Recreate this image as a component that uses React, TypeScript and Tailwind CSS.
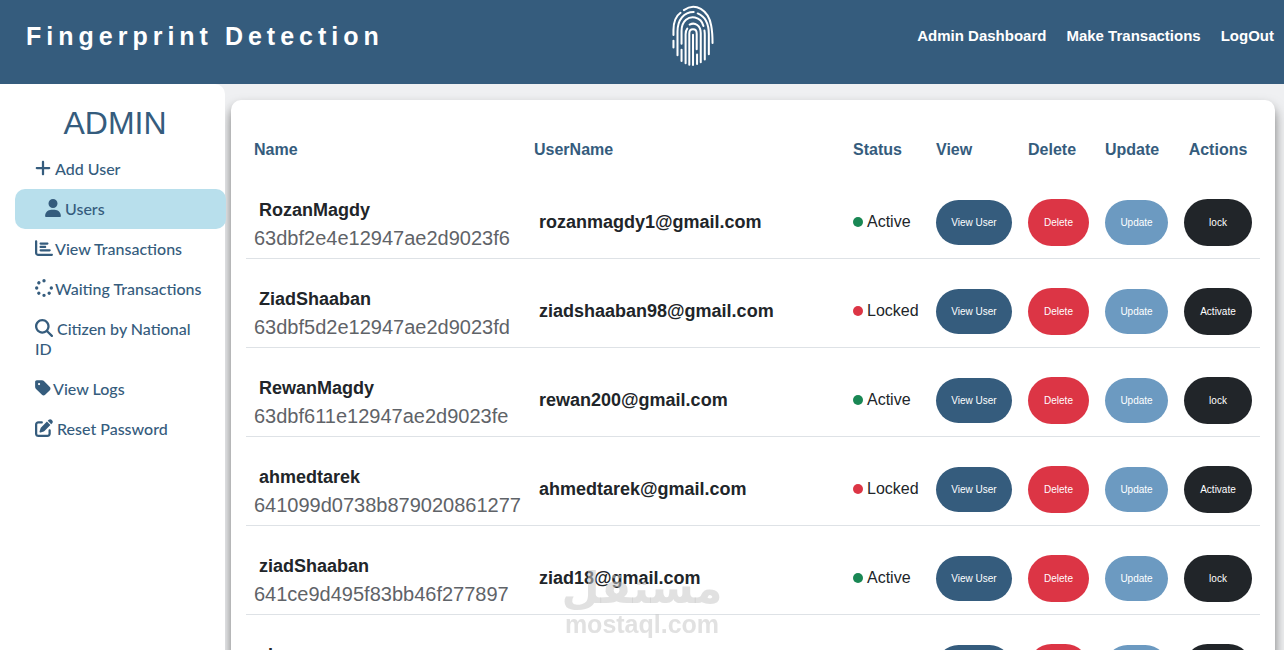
import type { IconType } from 'react-icons'
import {
  FaChartBar,
  FaMagnifyingGlass,
  FaPenToSquare,
  FaPlus,
  FaSpinner,
  FaTag,
  FaUser,
} from 'react-icons/fa6'
import { clsx } from 'clsx'

type User = {
  id: string
  name: string
  email: string
  active: boolean
}

const navLinks = ['Admin Dashboard', 'Make Transactions', 'LogOut']

const menu: { label: string; icon: IconType; iconClass: string; active?: boolean }[] = [
  { label: 'Add User', icon: FaPlus, iconClass: 'w-4 mr-1' },
  { label: 'Users', icon: FaUser, iconClass: 'w-4 mr-1', active: true },
  { label: 'View Transactions', icon: FaChartBar, iconClass: 'w-[18px] mr-0.5' },
  { label: 'Waiting Transactions', icon: FaSpinner, iconClass: 'w-[18px] mr-0.5' },
  { label: 'Citizen by National ID', icon: FaMagnifyingGlass, iconClass: 'w-[18px] mr-1' },
  { label: 'View Logs', icon: FaTag, iconClass: 'w-4 mr-0.5' },
  { label: 'Reset Password', icon: FaPenToSquare, iconClass: 'w-[18px] mr-1' },
]

const users: User[] = [
  { id: '63dbf2e4e12947ae2d9023f6', name: 'RozanMagdy', email: 'rozanmagdy1@gmail.com', active: true },
  { id: '63dbf5d2e12947ae2d9023fd', name: 'ZiadShaaban', email: 'ziadshaaban98@gmail.com', active: false },
  { id: '63dbf611e12947ae2d9023fe', name: 'RewanMagdy', email: 'rewan200@gmail.com', active: true },
  { id: '641099d0738b879020861277', name: 'ahmedtarek', email: 'ahmedtarek@gmail.com', active: false },
  { id: '641ce9d495f83bb46f277897', name: 'ziadShaaban', email: 'ziad18@gmail.com', active: true },
  { id: '641cf02b95f83bb46f2778a1', name: 'zizo', email: 'zizo@gmail.com', active: true },
]

function Fingerprint() {
  return (
    <svg viewBox="96 14 124 184" className="h-[62px] w-[42px]" fill="none" stroke="#fff" strokeWidth="6" strokeLinecap="round" aria-hidden="true">
      <path d="M100 106V92C100 68 108 49 121 40" />
      <path d="M131 32C165 8 204 32 212 78C215 94 216 110 216 130" />
      <path d="M100 123v20" />
      <path d="M112 166V96C112 60 131 38 160 38" />
      <path d="M172 42C196 52 205 78 205 104V163" />
      <path d="M124 132V94C124 62 146 50 164 54C178 57 186 68 189 79" />
      <path d="M192 93Q193 99 193 106V179" />
      <path d="M124 150v33" />
      <path d="M136 190V104Q136 93 141 87" />
      <path d="M148 75C164 67 181 78 181 100V187" />
      <path d="M147 194V102C147 85 169 85 169 102V148" />
      <path d="M170 164v28" />
      <path d="M158 195V105" />
    </svg>
  )
}

function Header() {
  return (
    <header className="grid h-[84px] grid-cols-[15fr_14fr] bg-[#355c7d] pr-2.5 pl-[26px] font-bold text-white">
      <h1 className="pt-5 text-[25px] leading-8 tracking-[5px] whitespace-nowrap">Fingerprint Detection</h1>
      <div className="flex items-start justify-between">
        <a href="#home" aria-label="Home" className="pt-1">
          <Fingerprint />
        </a>
        <nav className="flex gap-5 pt-6 text-[15px] leading-6 whitespace-nowrap">
          {navLinks.map((link) => (
            <a key={link} href="#nav">{link}</a>
          ))}
        </nav>
      </div>
    </header>
  )
}

function Sidebar() {
  return (
    <aside className="relative z-10 w-[225px] shrink-0 rounded-tr-[10px] bg-white pt-5 pl-[15px] text-[#355c7d]">
      <h2 className="pr-2.5 text-center text-[32px] leading-[38px]">ADMIN</h2>
      <ul className="mt-[7px] -mr-px font-['Lato',sans-serif] text-base leading-5 font-medium">
        {menu.map(({ label, icon: Icon, iconClass, active }) => (
          <li key={label}>
            <a
              href="#menu"
              className={clsx(
                'block py-2.5 pr-5',
                active ? 'rounded-[10px] bg-[#b8dfec] pl-[30px]' : 'pl-5'
              )}
            >
              <Icon className={clsx('inline h-[18px] align-[-2px]', iconClass)} />
              {label}
            </a>
          </li>
        ))}
      </ul>
    </aside>
  )
}

const button = 'block rounded-[25px] text-[10px] text-white'

function UserRow({ user }: { user: User }) {
  return (
    <tr className="border-b border-[#dee2e6]">
      <td className="px-2 pt-[26px] pb-1.5">
        <div className="pl-[5px] text-lg leading-7 font-bold">{user.name}</div>
        <div className="text-xl leading-7 text-[#5f6368]">{user.id}</div>
      </td>
      <td className="pt-6 pr-2 pb-2 pl-[13px] text-lg font-bold">{user.email}</td>
      <td className="px-2 pt-6 pb-2">
        <span className="flex items-center gap-1">
          <span className={clsx('size-2.5 rounded-full', user.active ? 'bg-[#198754]' : 'bg-[#dc3545]')} />
          {user.active ? 'Active' : 'Locked'}
        </span>
      </td>
      <td className="px-2 pt-6 pb-2">
        <button className={clsx(button, 'h-[45px] w-[76px] bg-[#355c7d]')}>View User</button>
      </td>
      <td className="px-2 pt-6 pb-2">
        <button className={clsx(button, 'h-[47px] w-[61px] bg-[#dc3545]')}>Delete</button>
      </td>
      <td className="px-2 pt-6 pb-2">
        <button className={clsx(button, 'h-[45px] w-[63px] bg-[#6c9ac1]')}>Update</button>
      </td>
      <td className="px-2 pt-6 pb-2">
        <button className={clsx(button, 'h-[47px] w-[68px] bg-[#212529]')}>{user.active ? 'lock' : 'Activate'}</button>
      </td>
    </tr>
  )
}

function UsersTable() {
  return (
    <table className="w-full table-fixed text-left">
      <thead className="text-[#355c7d]">
        <tr>
          <th className="w-[280px] px-2 pt-[22px] pb-2">Name</th>
          <th className="px-2 pt-[22px] pb-2">UserName</th>
          <th className="w-[83px] px-2 pt-[22px] pb-2">Status</th>
          <th className="w-[92px] px-2 pt-[22px] pb-2">View</th>
          <th className="w-[77px] px-2 pt-[22px] pb-2">Delete</th>
          <th className="w-[79px] px-2 pt-[22px] pb-2">Update</th>
          <th className="w-[84px] px-2 pt-[22px] pb-2 text-center">Actions</th>
        </tr>
      </thead>
      <tbody>
        {users.map((user) => (
          <UserRow key={user.id} user={user} />
        ))}
      </tbody>
    </table>
  )
}

function Watermark() {
  return (
    <div className="pointer-events-none fixed inset-x-0 bottom-3 flex flex-col items-center font-bold text-[#c8c8c8]/55">
      <span lang="ar" className="font-['DejaVu_Sans',sans-serif] text-[44px] leading-[44px]">مستقل</span>
      <span className="text-[25px] leading-7">mostaql.com</span>
    </div>
  )
}

export default function App() {
  return (
    <div className="min-h-screen bg-[#eff0f2] font-['Liberation_Sans',sans-serif] text-base text-[#212529]">
      <Header />
      <div className="flex">
        <Sidebar />
        <main className="min-w-0 flex-1 pt-4 pr-[9px] pl-1.5">
          <section className="rounded-[10px] bg-white px-[15px] pt-4 pb-6 shadow-[0_7px_12px_#777]">
            <UsersTable />
          </section>
        </main>
      </div>
      <Watermark />
    </div>
  )
}
